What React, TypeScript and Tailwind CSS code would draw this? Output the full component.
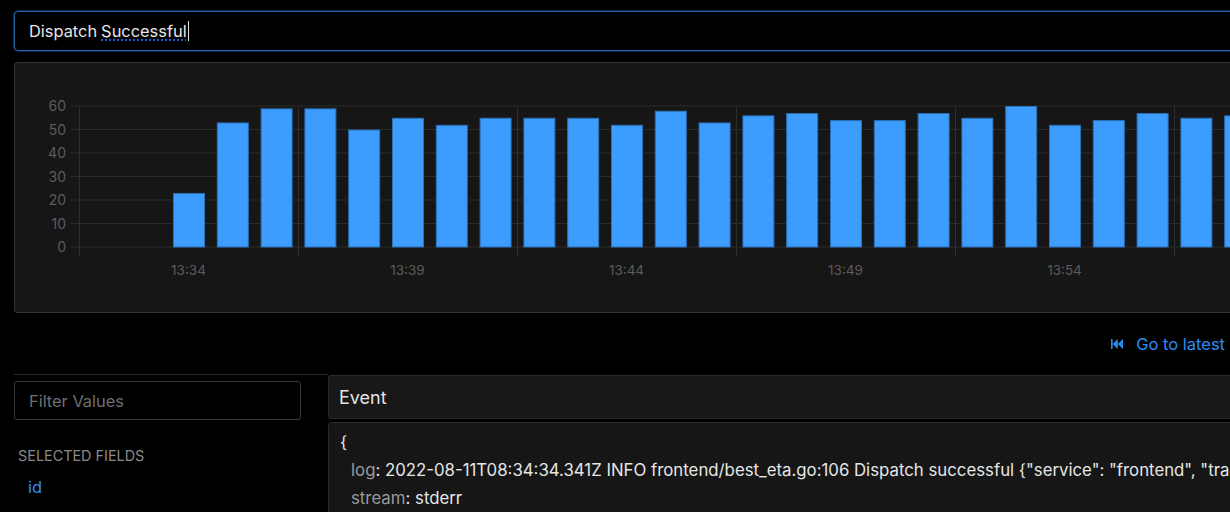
const values = [23, 53, 59, 59, 50, 55, 52, 55, 55, 55, 52, 58, 53, 56, 57, 54, 54, 57, 55, 60, 52, 54, 57, 55, 56];
const yTicks = [0, 10, 20, 30, 40, 50, 60];
const xTicks = ['13:34', '13:39', '13:44', '13:49', '13:54'];

// page coords -> value scale
const yFor = (v: number) => 247 - v * 2.35;

function HistogramChart() {
  return (
    <svg width="1240" height="249" className="block">
      <g transform="translate(-15,-63)">
        {yTicks.map((t) => (
          <g key={t}>
            <line x1={70} x2={1260} y1={yFor(t)} y2={yFor(t)} stroke="#2a2a2a" strokeWidth={1} />
            <text x={66} y={yFor(t) + 5} textAnchor="end" fontSize={14} fill="#5c5c5c">
              {t}
            </text>
          </g>
        ))}
        {[0, 1, 2, 3, 4, 5].map((k) => (
          <line
            key={k}
            x1={79.5 + k * 219}
            x2={79.5 + k * 219}
            y1={106}
            y2={256}
            stroke="#2e2e2e"
            strokeWidth={1}
          />
        ))}
        {xTicks.map((label, k) => (
          <text key={label} x={188.5 + k * 219} y={275} textAnchor="middle" fontSize={13.5} fill="#5c5c5c">
            {label}
          </text>
        ))}
        {values.map((v, i) => (
          <rect
            key={i}
            x={173.5 + i * 43.8}
            y={yFor(v) + 0.5}
            width={31}
            height={v * 2.35 - 0.5}
            fill="#3d9dff"
            stroke="#2b6fb6"
            strokeWidth={1}
          />
        ))}
      </g>
    </svg>
  );
}

export default function App() {
  return (
    <div
      className="w-full h-[512px] overflow-hidden bg-black text-[#e6e6e6]"
      style={{ fontFamily: 'Inter, "Noto Sans", sans-serif' }}
    >
      <div className="w-[1260px] pl-[14px] pt-[11px]">
        {/* Search bar */}
        <div className="h-[40px] rounded-[4px] border border-[#2260a6] shadow-[0_0_0_1px_#0c2644] bg-black flex items-center pl-[14px] text-[16.4px] text-[#e6e6e6]">
          <span>Dispatch </span>
          <span className="ml-[4px] underline decoration-dotted decoration-[#1f5fd6] decoration-2 underline-offset-[3px]">
            Successful
          </span>
          <span className="ml-[1px] w-[1px] h-[20px] bg-[#e6e6e6]" />
        </div>

        {/* Chart */}
        <div className="mt-[11px] h-[251px] rounded-[3px] border border-[#333] bg-[#161616] overflow-hidden">
          <HistogramChart />
        </div>

        {/* Go to latest */}
        <div className="h-[61px] w-[1216px] flex items-center justify-end pt-[1px] text-[#2a8cf3] text-[16.5px]">
          <svg width="12" height="10" viewBox="0 0 12 10" className="mr-[13px]" fill="#2a8cf3">
            <rect x="0" y="0" width="1.6" height="10" />
            <polygon points="1.6,5 6.8,0 6.8,10" />
            <polygon points="6.8,5 12,0 12,10" />
          </svg>
          <span className="mr-[5px]">Go to latest</span>
        </div>

        {/* Bottom */}
        <div className="flex">
          <div className="w-[314px] shrink-0 border-t border-[#2b2b2b] pt-[6px]">
            <div className="w-[287px] h-[39px] rounded-[3px] border border-[#3a3a3a] bg-black px-[14px] pt-[1px] flex items-center text-[16.4px] text-[#6f6f6f]">
              Filter Values
            </div>
            <div className="mt-[25px] ml-[4px] text-[14.4px] text-[#8a8a8a] uppercase">Selected Fields</div>
            <div className="mt-[8px] ml-[14px] text-[16.4px] text-[#2f8ff0]">id</div>
          </div>
          <div className="flex-1 min-w-0">
            <div className="mt-[1px] h-[44px] rounded-[3px] border border-[#2a2a2a] bg-[#181818] flex items-center pl-[10px] text-[18px] text-[#e4e4e4]">
              Event
            </div>
            <div className="mt-[3px] h-[120px] rounded-[3px] border border-[#2a2a2a] bg-[#161616] pl-[11px] pt-[5px] text-[16.8px] leading-[28px] whitespace-nowrap overflow-hidden">
              <div>{'{'}</div>
              <div className="pl-[11px]">
                <span className="text-[#9a9a9a]">log</span>
                <span>: 2022-08-11T08:34:34.341Z INFO frontend/best_eta.go:106 Dispatch successful {'{"service": "frontend", "tra'}</span>
              </div>
              <div className="pl-[11px]">
                <span className="text-[#9a9a9a]">stream</span>
                <span>: stderr</span>
              </div>
            </div>
          </div>
        </div>
      </div>
    </div>
  );
}
